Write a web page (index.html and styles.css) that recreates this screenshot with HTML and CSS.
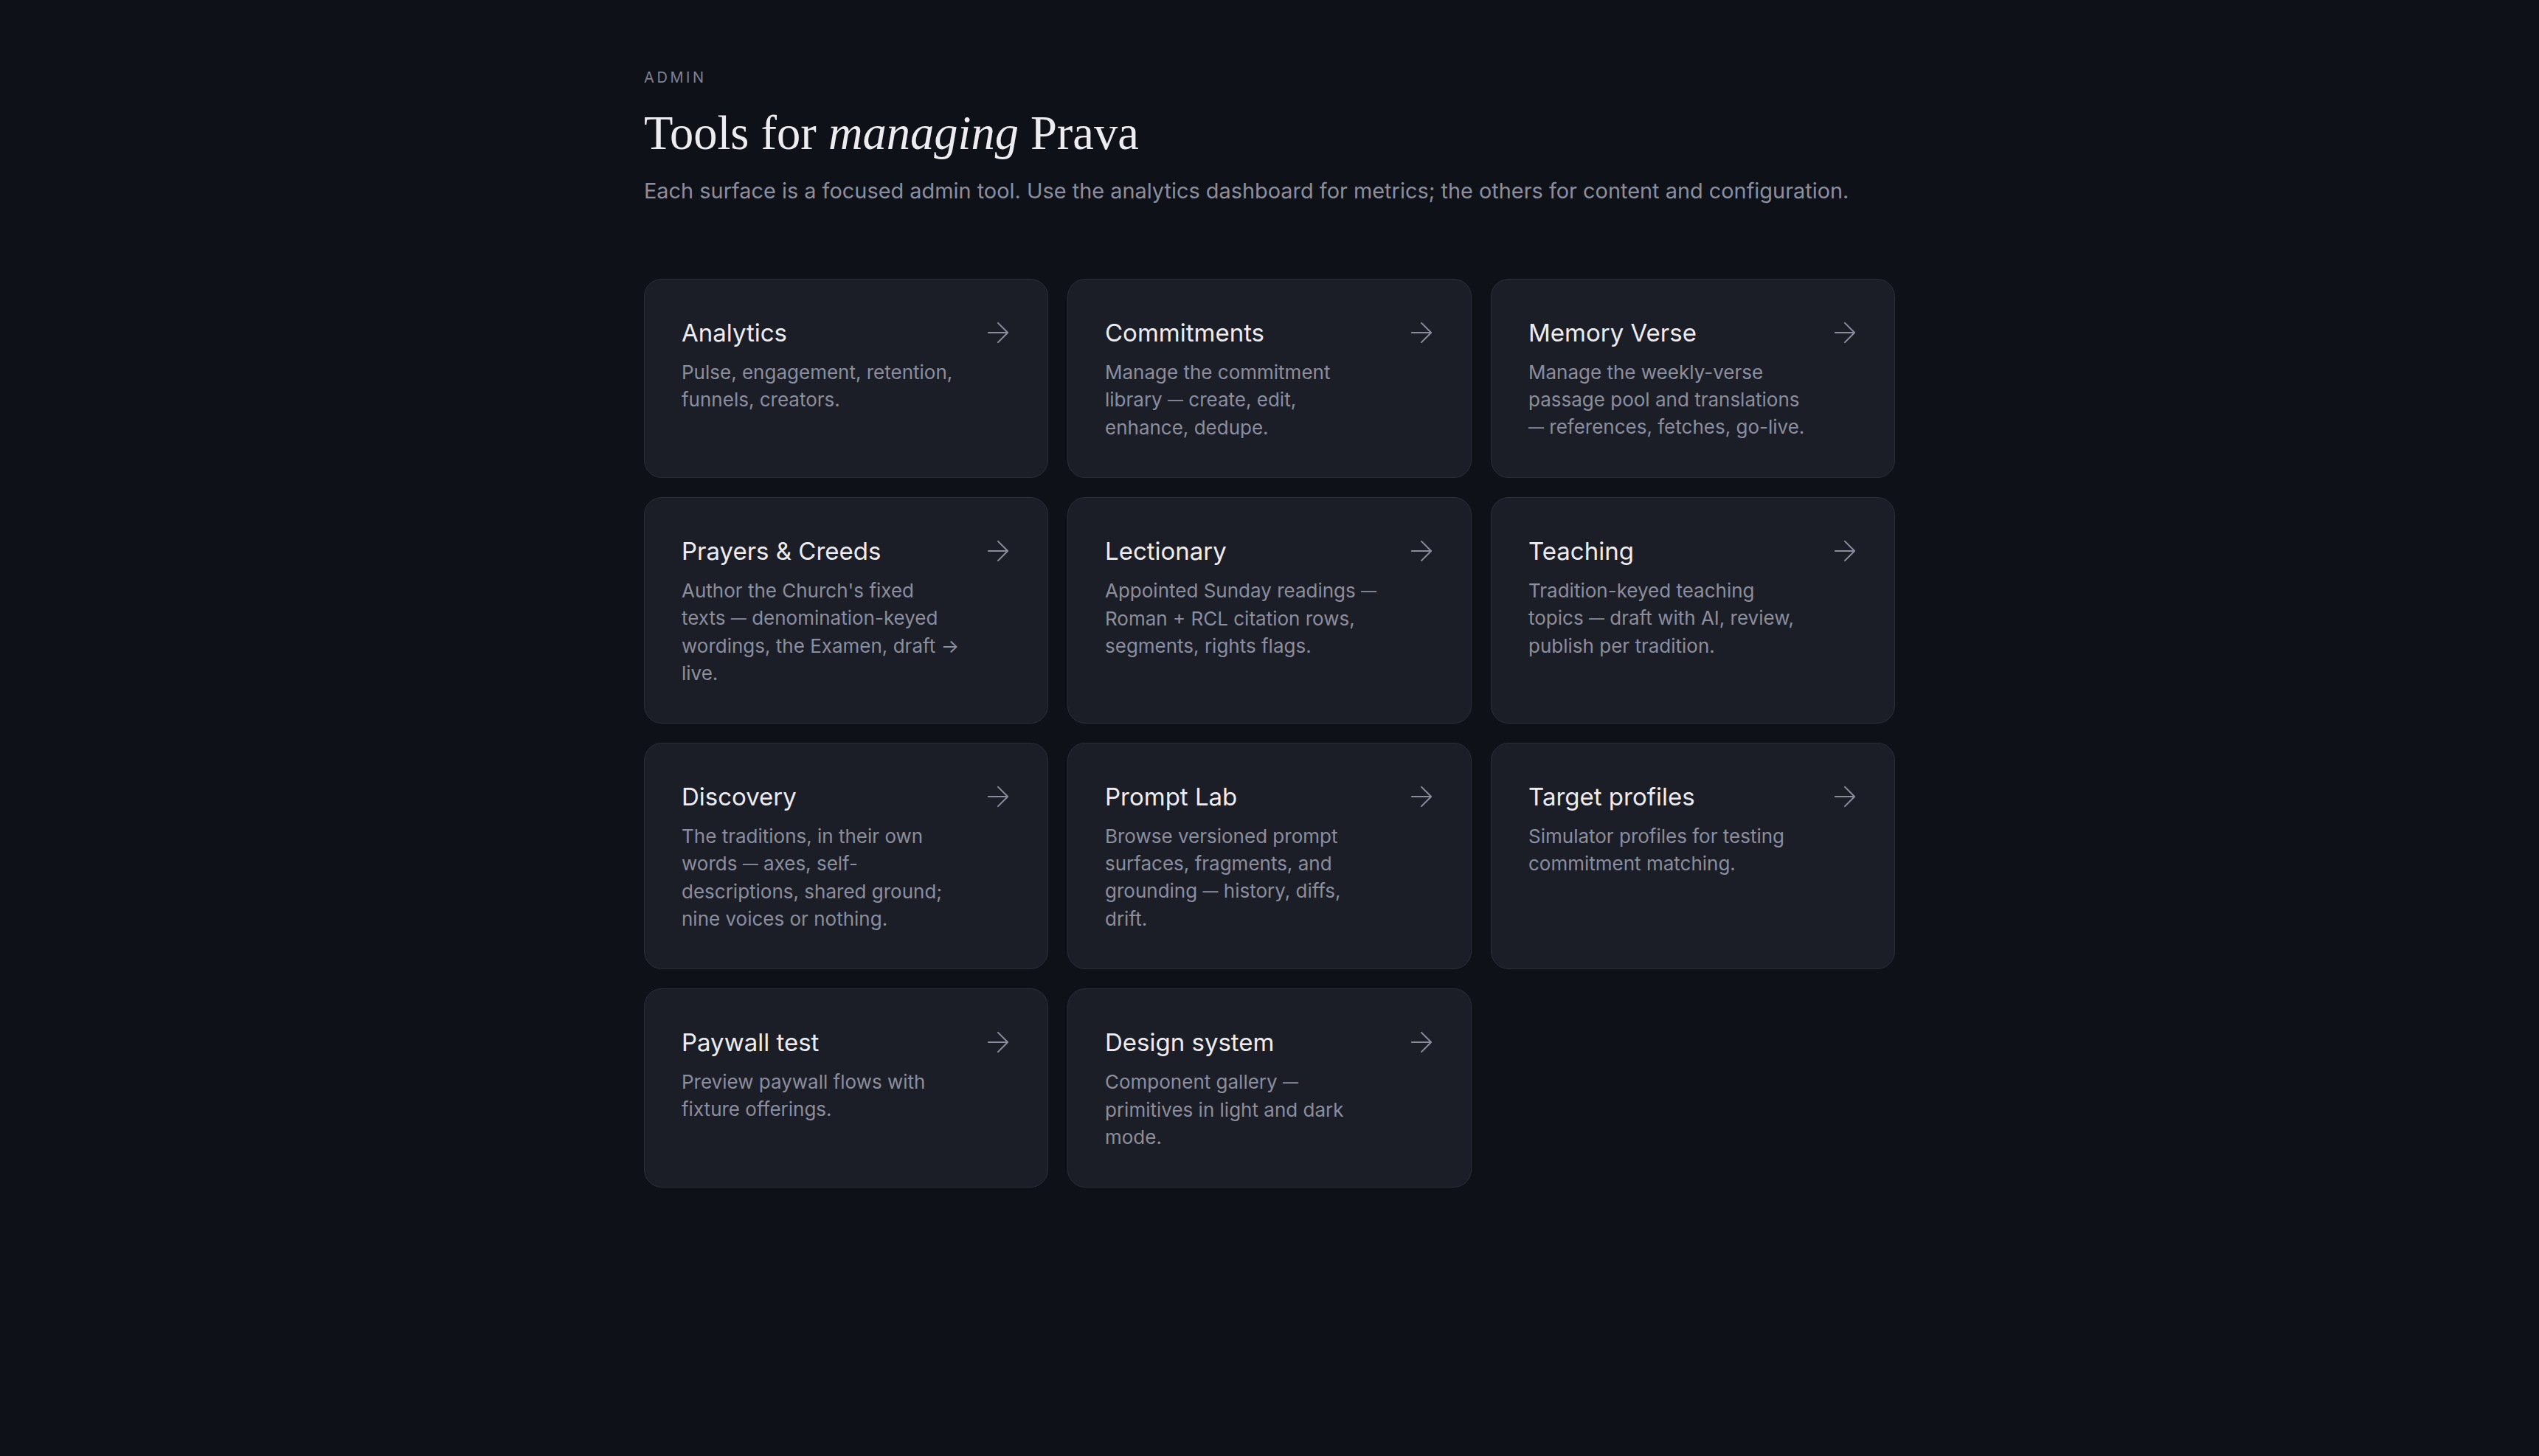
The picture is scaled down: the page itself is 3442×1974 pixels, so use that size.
FILE: index.html
```html
<!DOCTYPE html>
<html lang="en">
<head>
  <meta charset="UTF-8" />
  <title>Admin · Prava</title>
  <link rel="stylesheet" href="styles.css">
</head>
<body>
  <main class="page">
    <div class="eyebrow">ADMIN</div>
    <h1>Tools for <em>managing</em> Prava</h1>
    <p class="lead">Each surface is a focused admin tool. Use the analytics dashboard for metrics; the others for content and configuration.</p>

    <div class="tools">
      <a class="tool" href="#">
        <div class="tool-text">
          <h3>Analytics</h3>
          <p>Pulse, engagement, retention, funnels, creators.</p>
        </div>
        <svg class="arrow" viewBox="4 4 16 16"><path d="M5 12h14M12 5l7 7-7 7"/></svg>
      </a>
      <a class="tool" href="#">
        <div class="tool-text">
          <h3>Commitments</h3>
          <p>Manage the commitment library <span class="dash">—</span> create, edit, enhance, dedupe.</p>
        </div>
        <svg class="arrow" viewBox="4 4 16 16"><path d="M5 12h14M12 5l7 7-7 7"/></svg>
      </a>
      <a class="tool" href="#">
        <div class="tool-text">
          <h3>Memory Verse</h3>
          <p>Manage the weekly-verse passage pool and translations <span class="dash">—</span> references, fetches, go-live.</p>
        </div>
        <svg class="arrow" viewBox="4 4 16 16"><path d="M5 12h14M12 5l7 7-7 7"/></svg>
      </a>
      <a class="tool" href="#">
        <div class="tool-text">
          <h3>Prayers &amp; Creeds</h3>
          <p>Author the Church's fixed texts <span class="dash">—</span> denomination-keyed wordings, the Examen, draft → live.</p>
        </div>
        <svg class="arrow" viewBox="4 4 16 16"><path d="M5 12h14M12 5l7 7-7 7"/></svg>
      </a>
      <a class="tool" href="#">
        <div class="tool-text">
          <h3>Lectionary</h3>
          <p>Appointed Sunday readings <span class="dash">—</span> Roman + RCL citation rows, segments, rights flags.</p>
        </div>
        <svg class="arrow" viewBox="4 4 16 16"><path d="M5 12h14M12 5l7 7-7 7"/></svg>
      </a>
      <a class="tool" href="#">
        <div class="tool-text">
          <h3>Teaching</h3>
          <p>Tradition-keyed teaching topics <span class="dash">—</span> draft with AI, review, publish per tradition.</p>
        </div>
        <svg class="arrow" viewBox="4 4 16 16"><path d="M5 12h14M12 5l7 7-7 7"/></svg>
      </a>
      <a class="tool" href="#">
        <div class="tool-text">
          <h3>Discovery</h3>
          <p>The traditions, in their own words <span class="dash">—</span> axes, self-descriptions, shared ground; nine voices or nothing.</p>
        </div>
        <svg class="arrow" viewBox="4 4 16 16"><path d="M5 12h14M12 5l7 7-7 7"/></svg>
      </a>
      <a class="tool" href="#">
        <div class="tool-text">
          <h3>Prompt Lab</h3>
          <p>Browse versioned prompt surfaces, fragments, and grounding <span class="dash">—</span> history, diffs, drift.</p>
        </div>
        <svg class="arrow" viewBox="4 4 16 16"><path d="M5 12h14M12 5l7 7-7 7"/></svg>
      </a>
      <a class="tool" href="#">
        <div class="tool-text">
          <h3>Target profiles</h3>
          <p>Simulator profiles for testing commitment matching.</p>
        </div>
        <svg class="arrow" viewBox="4 4 16 16"><path d="M5 12h14M12 5l7 7-7 7"/></svg>
      </a>
      <a class="tool" href="#">
        <div class="tool-text">
          <h3>Paywall test</h3>
          <p>Preview paywall flows with fixture offerings.</p>
        </div>
        <svg class="arrow" viewBox="4 4 16 16"><path d="M5 12h14M12 5l7 7-7 7"/></svg>
      </a>
      <a class="tool" href="#">
        <div class="tool-text">
          <h3>Design system</h3>
          <p>Component gallery <span class="dash">—</span> primitives in light and dark mode.</p>
        </div>
        <svg class="arrow" viewBox="4 4 16 16"><path d="M5 12h14M12 5l7 7-7 7"/></svg>
      </a>
    </div>
  </main>
</body>
</html>
```

FILE: styles.css
```css
body {
  margin: 0;
  background-color: #0f1119;
  font-family: Inter, "Noto Sans", sans-serif;
  color: #ececf1;
}
.page {
  max-width: 1696px;
  margin: 0 auto;
  padding-top: 93px;
}
.eyebrow {
  font-size: 20px;
  line-height: 24px;
  letter-spacing: 0.18em;
  color: #7f8293;
}
h1 {
  margin: 26px 0 0;
  font-family: "Liberation Serif", serif;
  font-weight: 400;
  font-size: 64.5px;
  line-height: 76px;
  color: #ececf1;
}
h1 em {
  font-style: italic;
}
.lead {
  margin: 20px 0 0;
  font-size: 28.9px;
  line-height: 40px;
  color: #8b8e9e;
}
.tools {
  display: grid;
  grid-template-columns: repeat(3, 1fr);
  gap: 26px;
  margin-top: 99px;
}
.tool {
  display: flex;
  justify-content: space-between;
  align-items: flex-start;
  gap: 20px;
  padding: 52px 52px 49px 50px;
  background-color: #1c1e27;
  border: 1px solid #2b2e39;
  border-radius: 24px;
  text-decoration: none;
  color: inherit;
}
.tool-text {
  flex: 1;
}
.tool h3 {
  margin: 0;
  font-size: 33px;
  line-height: 40px;
  font-weight: 400;
  color: #ececf1;
}
.tool p {
  max-width: 378px;
  margin: 15px 0 0;
  font-size: 26px;
  line-height: 37px;
  color: #8b8e9e;
}
.dash {
  font-size: 21px;
  vertical-align: 1px;
}
.arrow {
  width: 30px;
  height: 30px;
  margin-top: 5px;
  flex-shrink: 0;
  fill: none;
  stroke: #8a8c9c;
  stroke-width: 1.1;
  stroke-linecap: round;
  stroke-linejoin: round;
}
```
